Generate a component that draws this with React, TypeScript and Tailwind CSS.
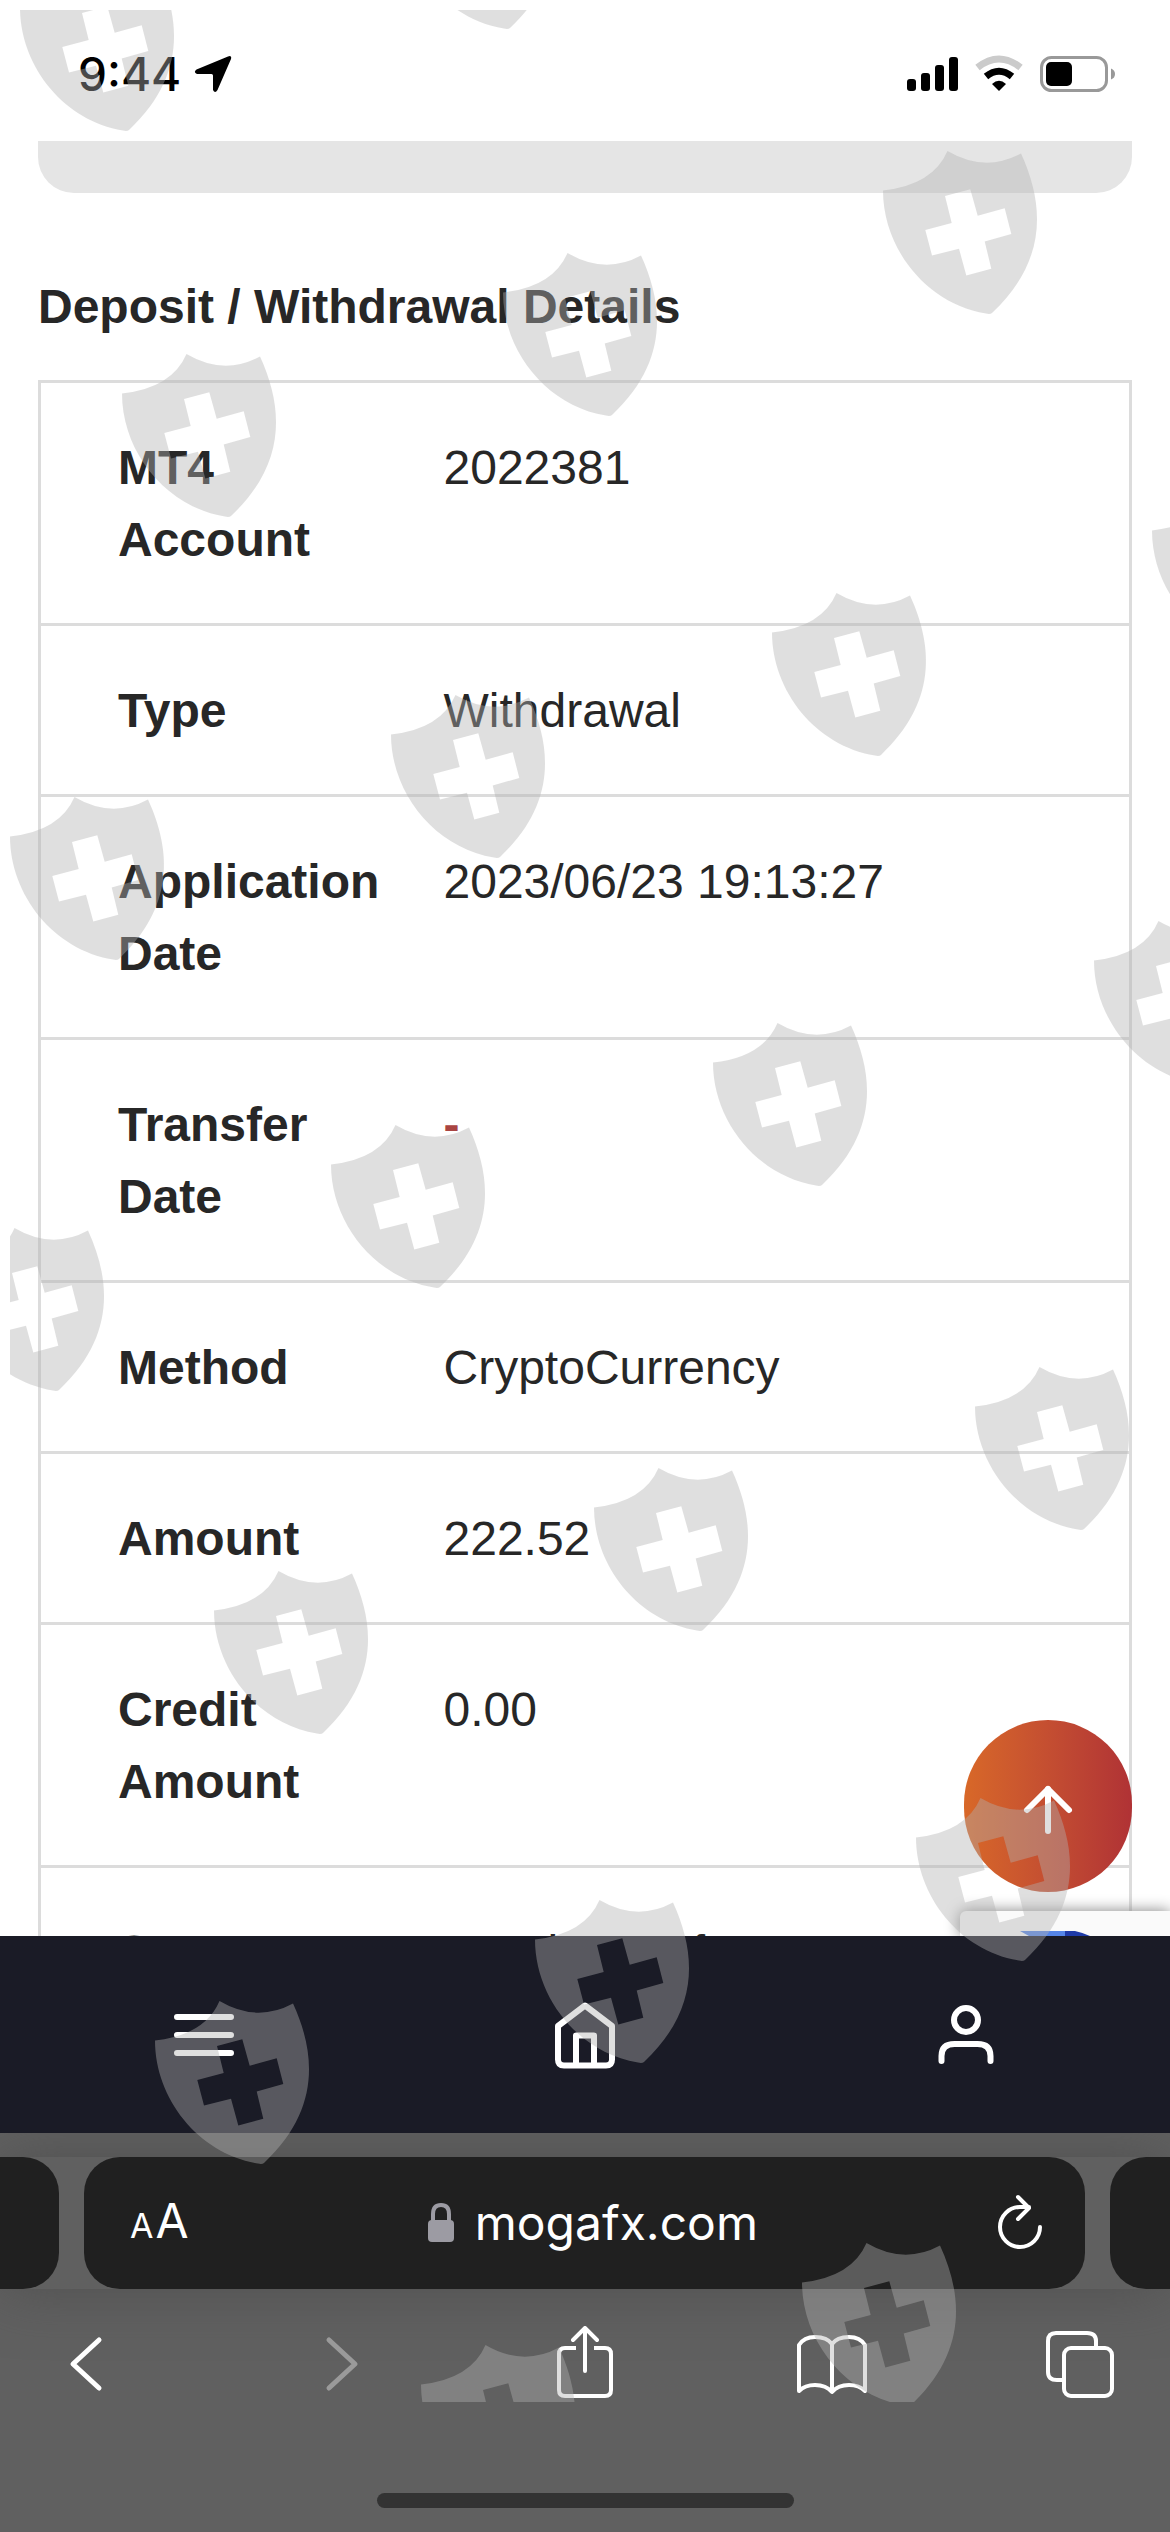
import { ArrowUp } from "lucide-react";

type Detail = {
	label: string;
	value: string;
	pending?: boolean;
};

const details: Detail[] = [
	{ label: "MT4 Account", value: "2022381" },
	{ label: "Type", value: "Withdrawal" },
	{ label: "Application Date", value: "2023/06/23 19:13:27" },
	{ label: "Transfer Date", value: "-", pending: true },
	{ label: "Method", value: "CryptoCurrency" },
	{ label: "Amount", value: "222.52" },
	{ label: "Credit Amount", value: "0.00" },
	{ label: "Status", value: "Need Transfer" },
];

/* watermark positions */
const shields = [
	[20, -32],
	[401, -134],
	[883, 151],
	[503, 253],
	[122, 354],
	[1152, 491],
	[772, 593],
	[391, 695],
	[10, 797],
	[1094, 921],
	[713, 1023],
	[331, 1125],
	[-50, 1228],
	[975, 1367],
	[594, 1468],
	[214, 1571],
	[916, 1798],
	[535, 1900],
	[155, 2001],
	[802, 2243],
	[421, 2345],
];

function Watermark() {
	return (
		<svg
			aria-hidden="true"
			className="pointer-events-none absolute top-[10px] left-[10px] z-50 h-[2392px] w-[1160px] max-w-full"
			viewBox="10 10 1160 2392"
			preserveAspectRatio="xMinYMin slice"
			fill="#b2b2b2"
			fillOpacity="0.41"
		>
			{shields.map(([x, y]) => (
				<path
					key={`${x}-${y}`}
					transform={`translate(${x} ${y})`}
					fillRule="evenodd"
					d="M0 39.500Q50 34 64.500 0Q102 22 138 2.500C162 55 164 110 109 162Q107 163.500 103 162.500C44 153 0 98 0 39.500ZM62 45L87.300 38.300L94.700 64.700L121.700 57.300L128.300 83L101.700 90.400L108.300 117.700L83.300 124.400L76 97.700L49 104.400L42.300 79L68.700 72Z"
				/>
			))}
		</svg>
	);
}

function StatusBar() {
	return (
		<header className="flex h-[141px] shrink-0 items-start justify-between bg-white pt-[54px] pr-[53px] pl-[78px]">
			<div className="flex items-center gap-[13px] text-black">
				<time className="font-['Inter',sans-serif] text-[46px] leading-[40px] font-medium">
					9:44
				</time>
				<svg width="38" height="38" viewBox="0 0 38 38" fill="currentColor">
					<path d="M34 1.500Q38 0 37 4L23.500 35Q21 39 19 35V20.500Q19 19 17.500 19H3Q-1 17 2.500 14.500Z" />
				</svg>
			</div>
			<svg width="212" height="40" viewBox="905 54 212 40" aria-label="Signal, Wi-Fi, battery">
				<rect x="907" y="79" width="9" height="12" rx="3" />
				<rect x="921" y="73" width="9" height="18" rx="3" />
				<rect x="935" y="65" width="9" height="26" rx="3" />
				<rect x="949" y="57" width="9" height="34" rx="3" />
				<path d="M977.500 67.500Q999 50.500 1020.500 67.500" fill="none" stroke="#cbcbcb" strokeWidth="7" />
				<path d="M986 76.500Q999 66 1012 76.500" fill="none" stroke="#000" strokeWidth="7" />
				<path d="M992 84Q999 77.500 1006 84L999 91Z" />
				<rect x="1041.500" y="57.500" width="65" height="33" rx="10" fill="none" stroke="#999" strokeWidth="3" />
				<rect x="1046" y="62" width="26" height="24" rx="5" />
				<path d="M1111 68.500Q1115 70 1115 74T1111 79.500Z" fill="#999" />
			</svg>
		</header>
	);
}

function DetailTable() {
	return (
		<table className="mt-[37px] w-full border-collapse border-[3px] border-[#dcdcdc] text-[48px] leading-[72px]">
			<tbody>
				{details.map((d) => (
					<tr key={d.label} className="border-b-[3px] border-[#dcdcdc] align-top">
						<th
							scope="row"
							className="w-[404px] pt-[49px] pr-[48px] pb-[47px] pl-[77px] text-left font-bold"
						>
							{d.label}
						</th>
						<td className="pt-[49px] pb-[47px]">
							{d.pending ? (
								<span className="font-bold text-[#a94442]">{d.value}</span>
							) : (
								d.value
							)}
						</td>
					</tr>
				))}
			</tbody>
		</table>
	);
}

function SiteNav() {
	const link = "flex flex-1 items-center justify-center text-white";
	return (
		<nav className="relative z-10 flex h-[197px] shrink-0 bg-[#1a1b26] px-[13px]">
			<button type="button" aria-label="Menu" className={link}>
				<svg width="72" height="72" viewBox="0 0 72 72" stroke="currentColor" strokeWidth="6" strokeLinecap="round">
					<path d="M9 18H63M9 36H63M9 54H63" />
				</svg>
			</button>
			<a href="#home" aria-label="Home" className={link}>
				<svg width="72" height="72" viewBox="0 0 72 72" fill="none" stroke="currentColor" strokeWidth="6" strokeLinejoin="round">
					<path d="M9 27L36 6.500L63 27V60.500Q63 66.500 57 66.500H15Q9 66.500 9 60.500ZM27 66.500V36.500H45V66.500" />
				</svg>
			</a>
			<a href="#account" aria-label="Account" className={link}>
				<svg width="72" height="72" viewBox="0 0 72 72" fill="none" stroke="currentColor" strokeWidth="6" strokeLinecap="round">
					<circle cx="36" cy="21" r="12" />
					<path d="M11.500 62V57Q11.500 45 24.500 45H47.500Q60.500 45 60.500 57V62" />
				</svg>
			</a>
		</nav>
	);
}

function BrowserBar() {
	return (
		<footer className="flex shrink-0 flex-col items-center bg-[#606060] pt-[24px] pb-[24px] font-['Inter',sans-serif] text-white">
			<div className="flex h-[132px] w-full gap-[25px] shadow-[0_0_60px_#505050]">
				<div className="w-[59px] rounded-r-[36px] bg-[#202020]" />
				<div className="flex flex-1 items-center justify-between rounded-[36px] bg-[#202020] pr-[41px] pl-[46px]">
					<button type="button" aria-label="Page settings" className="flex items-baseline gap-[2px] leading-[60px]">
						<span className="text-[34px]">A</span>
						<span className="text-[48px]">A</span>
					</button>
					<div className="flex items-center gap-[20px]">
						<svg width="28" height="42" viewBox="0 0 28 42">
							<path d="M6 20V12Q6 3 14 3T22 12V20" fill="none" stroke="#9c9ba3" strokeWidth="4" />
							<rect x="1" y="18" width="26" height="22" rx="4" fill="#9c9ba3" />
						</svg>
						<span className="text-[48px] leading-[60px]">mogafx.com</span>
					</div>
					<button type="button" aria-label="Reload">
						<svg width="48" height="60" viewBox="0 0 48 60" fill="none" stroke="currentColor" strokeWidth="4" strokeLinecap="round" strokeLinejoin="round">
							<path d="M44 34A20 20 0 1 1 24 14H33M22 4L33 15L22 26" />
						</svg>
					</button>
				</div>
				<div className="w-[60px] rounded-l-[36px] bg-[#202020]" />
			</div>
			<div className="mt-[37px] flex w-full justify-between pr-[54px] pl-[50px]">
				<button type="button" aria-label="Back">
					<svg width="72" height="72" viewBox="0 0 72 72" fill="none" stroke="currentColor" strokeWidth="5" strokeLinecap="round" strokeLinejoin="round">
						<path d="M49 14L23 38L49 62" />
					</svg>
				</button>
				<button type="button" aria-label="Forward" disabled className="text-[#9a9a9a]">
					<svg width="72" height="72" viewBox="0 0 72 72" fill="none" stroke="currentColor" strokeWidth="5" strokeLinecap="round" strokeLinejoin="round">
						<path d="M30 14L56 38L30 62" />
					</svg>
				</button>
				<button type="button" aria-label="Share">
					<svg width="72" height="72" viewBox="0 0 72 72" fill="none" stroke="currentColor" strokeWidth="4" strokeLinecap="butt">
						<path d="M29 22H18Q12 22 12 28V64Q12 70 18 70H58Q64 70 64 64V28Q64 22 58 22H47" />
						<path d="M38 45V2M26 14L38 2L50 14" strokeLinecap="round" strokeLinejoin="round" />
					</svg>
				</button>
				<button type="button" aria-label="Bookmarks">
					<svg width="72" height="72" viewBox="0 0 72 72" fill="none" stroke="currentColor" strokeWidth="4" strokeLinejoin="round">
						<path d="M36 18Q31 11 19 11Q8 11 3 19V65Q9 59 19 59Q30 59 36 66Q42 59 53 59Q63 59 69 65V19Q64 11 53 11Q41 11 36 18V66" />
					</svg>
				</button>
				<button type="button" aria-label="Tabs">
					<svg width="72" height="72" viewBox="0 0 72 72" fill="none" stroke="currentColor" strokeWidth="4">
						<rect x="20" y="22" width="48" height="48" rx="7" />
						<path d="M20 54H13Q4 54 4 46V15Q4 7 12 7H43Q52 7 52 15V22" />
					</svg>
				</button>
			</div>
			<div className="mt-[95px] h-[15px] w-[417px] rounded-full bg-[#333333]" />
		</footer>
	);
}

export default function App() {
	return (
		<div className="relative flex h-screen flex-col overflow-hidden bg-white font-['Liberation_Sans',Arial,sans-serif] text-[#272727]">
			<StatusBar />
			<main className="relative min-h-0 flex-1 overflow-hidden">
				<div className="px-[38px]">
					<div className="h-[52px] rounded-b-[36px] bg-[#e5e5e5]" />
					<h1 className="mt-[78px] text-[48px] leading-[72px] font-bold">
						Deposit / Withdrawal Details
					</h1>
					<DetailTable />
				</div>

				{/* reCAPTCHA badge */}
				<div className="absolute right-0 bottom-0 h-[25px] w-[210px] rounded-tl-[6px] bg-[#fafafa] shadow-[0_0_15px_#808080]">
					<svg className="absolute bottom-0 left-[60px]" width="74" height="5" viewBox="0 0 74 5">
						<path d="M0 0H45V5H9Z" fill="#5585e8" />
						<path d="M45 0H55Q64 2 70 5H45Z" fill="#1f3ba8" />
					</svg>
				</div>

				<button
					type="button"
					aria-label="Back to top"
					className="absolute right-[38px] bottom-[44px] flex h-[172px] w-[168px] items-center justify-center rounded-full bg-linear-to-r from-[#d86828] to-[#b03235] pt-[7px] text-white"
				>
					<ArrowUp size={72} strokeWidth={2} />
				</button>
			</main>
			<SiteNav />
			<BrowserBar />
			<Watermark />
		</div>
	);
}
